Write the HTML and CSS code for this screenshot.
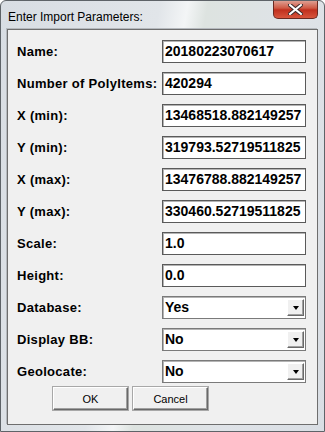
FILE: index.html
```html
<!DOCTYPE html>
<html lang="en">
<head>
    <title>Enter Import Parameters</title>
    <meta charset="UTF-8">
    <link rel="stylesheet" href="styles.css">
</head>
<body>
    <div class="window">
        <div class="titlebar">
            <span class="title">Enter Import Parameters:</span>
            <div class="close">
                <svg width="15" height="11" viewBox="0 0 15 11">
                    <path d="M2 1 L13 10 M13 1 L2 10" stroke="#3b2a2a" stroke-width="4" stroke-linecap="square"/>
                    <path d="M2 1 L13 10 M13 1 L2 10" stroke="#ffffff" stroke-width="2" stroke-linecap="square"/>
                </svg>
            </div>
        </div>

        <div class="client">
            <div class="form">
                <label class="label">Name:</label>
                <div class="field">20180223070617</div>

                <label class="label">Number of PolyItems:</label>
                <div class="field">420294</div>

                <label class="label">X (min):</label>
                <div class="field">13468518.882149257</div>

                <label class="label">Y (min):</label>
                <div class="field">319793.52719511825</div>

                <label class="label">X (max):</label>
                <div class="field">13476788.882149257</div>

                <label class="label">Y (max):</label>
                <div class="field">330460.52719511825</div>

                <label class="label">Scale:</label>
                <div class="field">1.0</div>

                <label class="label">Height:</label>
                <div class="field">0.0</div>

                <label class="label">Database:</label>
                <div class="field combo"><span>Yes</span><span class="arrow"></span></div>

                <label class="label">Display BB:</label>
                <div class="field combo"><span>No</span><span class="arrow"></span></div>

                <label class="label">Geolocate:</label>
                <div class="field combo"><span>No</span><span class="arrow"></span></div>
            </div>

            <div class="buttons">
                <button class="button">OK</button>
                <button class="button">Cancel</button>
            </div>
        </div>
    </div>
</body>
</html>
```

FILE: styles.css
```css
html, body{
    margin: 0;
    padding: 0;
    background-color: #ffffff;
}

.window{
    width: 325px;
    height: 432px;
    box-sizing: border-box;
    display: flex;
    flex-direction: column;
    border: 1px solid #5e6368;
    border-radius: 6px 6px 0 0;
    background: linear-gradient(100deg, #d8dde3 0%, #e1e5e9 40%, #f3f5f6 47%, #dde3e0 52%, #dfe3e8 75%, #d9dee4 100%);
    overflow: hidden;
}

.titlebar{
    height: 28px;
    display: flex;
    align-items: flex-start;
    justify-content: space-between;
}

.title{
    font-family: "Liberation Sans", Arial, sans-serif;
    font-size: 12px;
    color: #000000;
    margin: 9px 0 0 7px;
}

.close{
    width: 45px;
    height: 19px;
    margin-right: 6px;
    margin-top: -1px;
    box-sizing: border-box;
    border: 1px solid #6a2a22;
    border-top: none;
    border-radius: 0 0 5px 5px;
    background: linear-gradient(#e0a89c 0%, #cf5a45 45%, #c0301e 55%, #d8553d 100%);
    display: flex;
    align-items: center;
    justify-content: center;
}

.client{
    flex: 1;
    margin: 0 6px 6px 6px;
    border: 1px solid #6e6e6e;
    background-color: #f0f0f0;
    box-shadow: -1px -1px 0 #b5b9be;
    display: flex;
    flex-direction: column;
}

.form{
    display: grid;
    grid-template-columns: 145px 144px;
    grid-auto-rows: 23px;
    row-gap: 9px;
    padding: 10px 0 0 9px;
    align-items: center;
}

.label{
    font-family: "Liberation Sans", Arial, sans-serif;
    font-weight: bold;
    font-size: 13px;
    letter-spacing: 0.3px;
    color: #000000;
}

.field{
    height: 23px;
    box-sizing: border-box;
    background-color: #ffffff;
    border: 1px solid #5a5a5a;
    box-shadow: inset 1px 1px 0 #b4b4b4;
    font-family: "Liberation Sans", Arial, sans-serif;
    font-weight: bold;
    font-size: 14px;
    line-height: 21px;
    padding-left: 2px;
    color: #000000;
    white-space: nowrap;
    overflow: hidden;
}

.combo{
    display: flex;
    justify-content: space-between;
    align-items: center;
    padding-right: 1px;
    border-color: #7a7a7a;
}

.arrow{
    width: 17px;
    height: 17px;
    box-sizing: border-box;
    background-color: #f0f0f0;
    border-top: 1px solid #ffffff;
    border-left: 1px solid #ffffff;
    border-right: 1px solid #696969;
    border-bottom: 1px solid #696969;
    box-shadow: inset -1px -1px 0 #a0a0a0;
    display: flex;
    align-items: center;
    justify-content: center;
}

.arrow::after{
    content: "";
    border-left: 3.5px solid transparent;
    border-right: 3.5px solid transparent;
    border-top: 4px solid #000000;
    margin-top: 1px;
}

.buttons{
    display: flex;
    gap: 5px;
    padding: 4px 0 0 45px;
}

.button{
    width: 75px;
    height: 23px;
    background-color: #f0f0f0;
    border-top: 1px solid #ffffff;
    border-left: 1px solid #ffffff;
    border-right: 1px solid #696969;
    border-bottom: 1px solid #696969;
    box-shadow: inset -1px -1px 0 #a0a0a0, 0 0 0 1px #a8a8a8;
    font-family: "Liberation Sans", Arial, sans-serif;
    font-size: 11px;
    color: #000000;
    padding: 0;
}
```
